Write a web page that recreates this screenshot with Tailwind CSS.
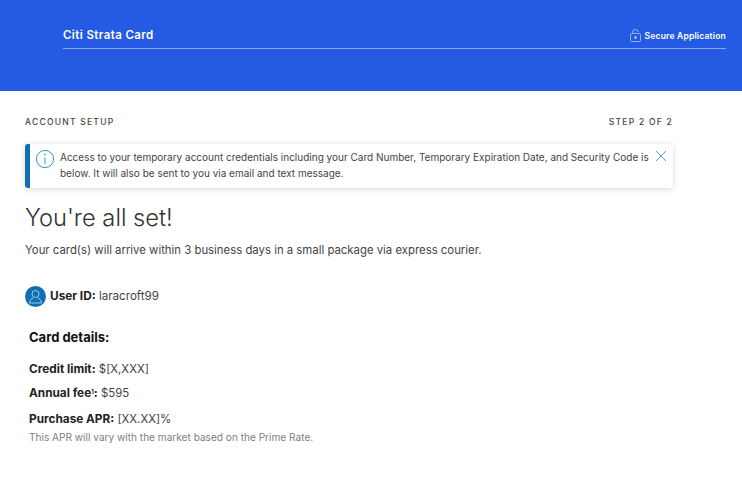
<!DOCTYPE html>
<html lang="en">
<head>
  <meta charset="UTF-8" />
  <title>Citi Strata Card</title>
  <script src="https://cdn.jsdelivr.net/npm/@tailwindcss/browser@4"></script>
</head>
<body class="bg-white font-['Inter','Liberation_Sans',sans-serif] text-[#333] w-[742px] h-[482px] overflow-hidden">
  <!-- Header -->
  <header class="bg-[#255be3] h-[91px] pl-[63px] pr-[16px] pt-[27px]">
    <div class="flex justify-between items-center h-[22px] border-b border-[#8aa6ee]">
      <span class="text-[11.5px] font-semibold tracking-[0.4px] text-white -mt-[4px]">Citi Strata Card</span>
      <span class="flex items-center gap-[4px] text-[8.5px] font-semibold tracking-[0.2px] text-white -mt-[2px]">
        <svg class="-mt-[2px]" width="11" height="13" viewBox="0 0 11 13" fill="none" stroke="#b5c7f5" stroke-width="0.8">
          <rect x="0.5" y="4.5" width="10" height="8" rx="1" />
          <path d="M2.8 4.5V2.8a2.6 2.4 0 0 1 5.2 0v0.4" />
          <circle cx="5.5" cy="8.5" r="1" fill="#b5c7f5" />
        </svg>
        Secure Application
      </span>
    </div>
  </header>

  <main class="w-[648px] ml-[25px]">
    <div class="flex justify-between pt-[25px] text-[8.5px] font-medium tracking-[1.25px] text-[#444] leading-[12px]">
      <span>ACCOUNT SETUP</span>
      <span>STEP 2 OF 2</span>
    </div>

    <!-- Alert -->
    <div class="mt-[16px] h-[44px] flex bg-white rounded-[3px] border-l-[5px] border-[#0f6fb0] shadow-[0_1px_6px_rgba(0,0,0,0.16)] pl-[5px] pr-[6px]">
      <svg class="mt-[5px] shrink-0" width="20" height="20" viewBox="0 0 20 20" fill="none" stroke="#3b93cb" stroke-width="1">
        <circle cx="10" cy="10" r="8.6" />
        <path d="M10 8.5V15" />
        <circle cx="10" cy="5.6" r="0.5" fill="#3b93cb" />
      </svg>
      <p class="ml-[5px] mt-[5px] w-[592px] text-[10px] leading-[16px] text-[#444]">Access to your temporary account credentials including your Card Number, Temporary Expiration Date, and Security Code is below. It will also be sent to you via email and text message.</p>
      <svg class="mt-[6px] ml-[3px] shrink-0" width="12" height="12" viewBox="0 0 12 12" stroke="#5ba3d6" stroke-width="1">
        <path d="M1 1L11 11M11 1L1 11" />
      </svg>
    </div>

    <h1 class="mt-[14px] text-[23.7px] font-light leading-[32px] text-[#333]">You're all set!</h1>
    <p class="mt-[8px] text-[11.37px] leading-[16px] text-[#444]">Your card(s) will arrive within 3 business days in a small package via express courier.</p>

    <!-- User ID -->
    <div class="mt-[28px] flex items-center gap-[4px] text-[11.6px] text-[#444]">
      <span class="w-[21px] h-[21px] rounded-full bg-[#0f6fb0] flex items-center justify-center">
        <svg width="15" height="15" viewBox="0 0 15 15" fill="none" stroke="#a9d2ee" stroke-width="0.9">
          <circle cx="7.5" cy="5" r="3.5" />
          <path d="M1.5 14c0-3 2.5-4.6 3.8-5M13.5 14c0-3-2.5-4.6-3.8-5M1.5 14H13.5" />
        </svg>
      </span>
      <span><b class="font-bold text-[#222] text-[11.8px]">User ID:</b> laracroft99</span>
    </div>

    <!-- Card details -->
    <div class="ml-[4px] mt-[20px] text-[11.4px] text-[#444]">
      <h2 class="text-[13px] font-bold leading-[20px] text-[#111]">Card details:</h2>
      <p class="mt-[14px] leading-[16px]"><b class="font-bold text-[#222] text-[11.8px]">Credit limit:</b> $[X,XXX]</p>
      <p class="mt-[8px] leading-[16px]"><b class="font-bold text-[#222] text-[11.8px]">Annual fee<span class="relative -top-[3px] text-[6px]">1</span>:</b> $595</p>
      <p class="mt-[8px] h-[16px] leading-[16px]"><b class="font-bold text-[#222] text-[11.8px]">Purchase APR:</b> [XX.XX]%</p>
      <p class="mt-[3px] text-[10.1px] leading-[14px] text-[#808080]">This APR will vary with the market based on the Prime Rate.</p>
    </div>
  </main>
</body>
</html>
